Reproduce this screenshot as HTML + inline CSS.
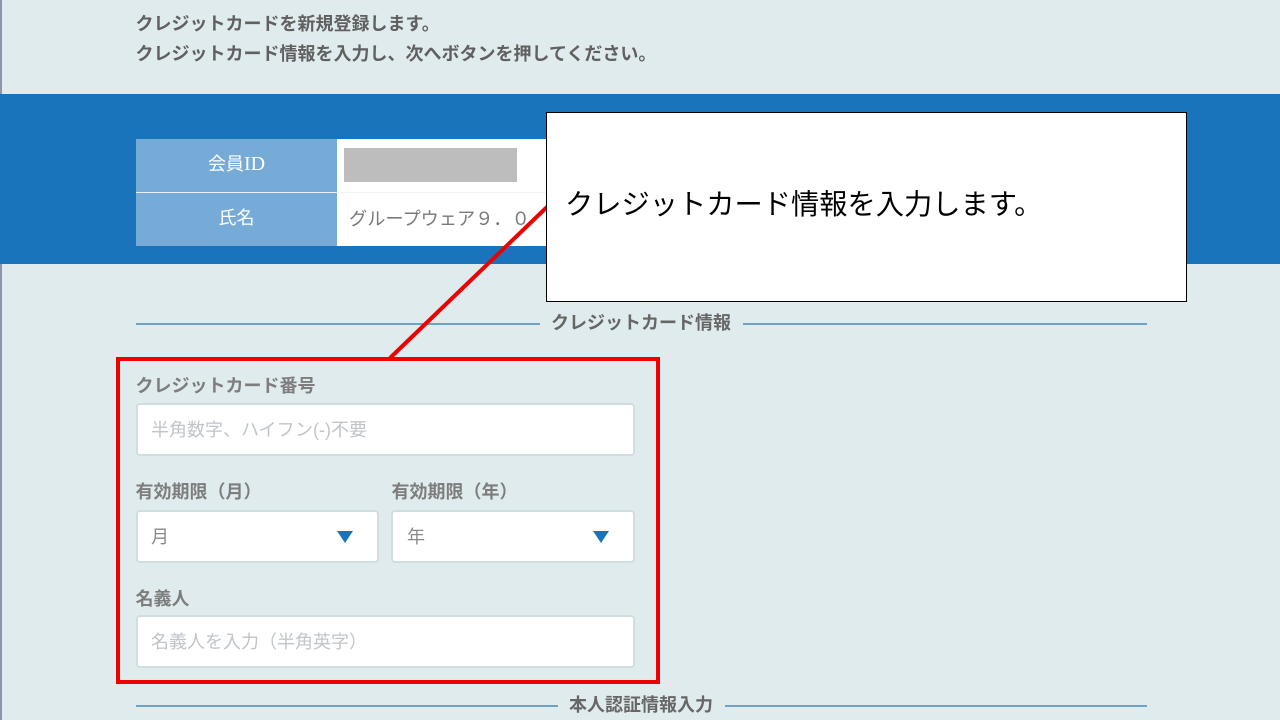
<!DOCTYPE html>
<html lang="ja">
<head>
<meta charset="utf-8">
<style>
html,body{margin:0;padding:0;width:1280px;height:720px;overflow:hidden;background:#e0ebee;}
body{position:relative;font-family:"Liberation Sans","Noto Sans CJK JP",sans-serif;}
.a{position:absolute;white-space:nowrap;}
.lb{font-weight:700;color:#7d7d7d;font-size:18px;line-height:20px;}
.in{position:absolute;box-sizing:border-box;background:#fff;border:2px solid #d0dee1;border-radius:4px;}
.ph{color:#c0c5c9;font-size:18px;line-height:24px;}
.ln{position:absolute;height:2px;background:#6da2c4;}
.hd{font-weight:700;color:#666;font-size:18px;line-height:22px;}
</style>
</head>
<body>
<div class="a" style="left:0;top:0;width:1.5px;height:720px;background:#8f93ab;"></div>
<div class="a hd" style="left:135.5px;top:13px;color:#606060;">クレジットカードを新規登録します。</div>
<div class="a hd" style="left:135.5px;top:43px;color:#606060;">クレジットカード情報を入力し、次へボタンを押してください。</div>

<div class="a" style="left:0;top:94px;width:1280px;height:170px;background:#1a74bb;"></div>
<div class="a" style="left:136px;top:139px;width:201px;height:107px;background:#76abd7;"></div>
<div class="a" style="left:337px;top:139px;width:220px;height:107px;background:#fff;"></div>
<div class="a" style="left:136px;top:192px;width:201px;height:1px;background:#e6f0f6;"></div>
<div class="a" style="left:337px;top:192px;width:220px;height:1px;background:#eef3f6;"></div>
<div class="a" style="left:136px;top:152px;width:201px;text-align:center;color:#fff;font-size:18px;line-height:24px;">会員<span style="font-family:'Liberation Serif',serif;font-size:20px;">ID</span></div>
<div class="a" style="left:136px;top:206px;width:201px;text-align:center;color:#fff;font-size:18px;line-height:24px;">氏名</div>
<div class="a" style="left:344px;top:148px;width:173px;height:34px;background:#bdbdbd;"></div>
<div class="a" style="left:349px;top:207px;color:#7a7a7a;font-size:18.2px;line-height:24px;">グループウェア９．０</div>

<div class="ln" style="left:136px;top:323px;width:404px;"></div>
<div class="ln" style="left:743px;top:323px;width:404px;"></div>
<div class="a hd" style="left:551px;top:312px;">クレジットカード情報</div>

<svg class="a" style="left:0;top:0;" width="1280" height="720" viewBox="0 0 1280 720"><path d="M548 206 L390 358" stroke="#ee0000" stroke-width="4" fill="none"/></svg>

<div class="a" style="left:546px;top:112px;width:641px;height:190px;box-sizing:border-box;background:#fff;border:1px solid #000;"></div>
<div class="a" style="left:565px;top:187px;color:#000;font-size:28.25px;line-height:34px;">クレジットカード情報を入力します。</div>

<div class="a" style="left:116px;top:357px;width:544px;height:327px;box-sizing:border-box;border:4px solid #ee0000;"></div>

<div class="a lb" style="left:135.5px;top:376px;">クレジットカード番号</div>
<div class="in" style="left:136px;top:403px;width:499px;height:53px;"></div>
<div class="a ph" style="left:151px;top:418px;">半角数字、ハイフン(-)不要</div>

<div class="a lb" style="left:135.5px;top:482px;">有効期限（月）</div>
<div class="in" style="left:136px;top:510px;width:243px;height:53px;"></div>
<div class="a" style="left:151px;top:525px;color:#8a8a8a;font-size:18px;line-height:24px;">月</div>
<svg class="a" style="left:336px;top:530px;" width="18" height="14"><path d="M1 1 H17 L9 13 Z" fill="#1a74bb"/></svg>

<div class="a lb" style="left:391.5px;top:482px;">有効期限（年）</div>
<div class="in" style="left:391px;top:510px;width:244px;height:53px;"></div>
<div class="a" style="left:407px;top:525px;color:#8a8a8a;font-size:18px;line-height:24px;">年</div>
<svg class="a" style="left:592px;top:530px;" width="18" height="14"><path d="M1 1 H17 L9 13 Z" fill="#1a74bb"/></svg>

<div class="a lb" style="left:135.5px;top:589px;">名義人</div>
<div class="in" style="left:136px;top:615px;width:499px;height:53px;"></div>
<div class="a ph" style="left:151px;top:630px;">名義人を入力（半角英字）</div>

<div class="ln" style="left:136px;top:705px;width:422px;"></div>
<div class="ln" style="left:725px;top:705px;width:422px;"></div>
<div class="a hd" style="left:569px;top:694px;">本人認証情報入力</div>
</body>
</html>
